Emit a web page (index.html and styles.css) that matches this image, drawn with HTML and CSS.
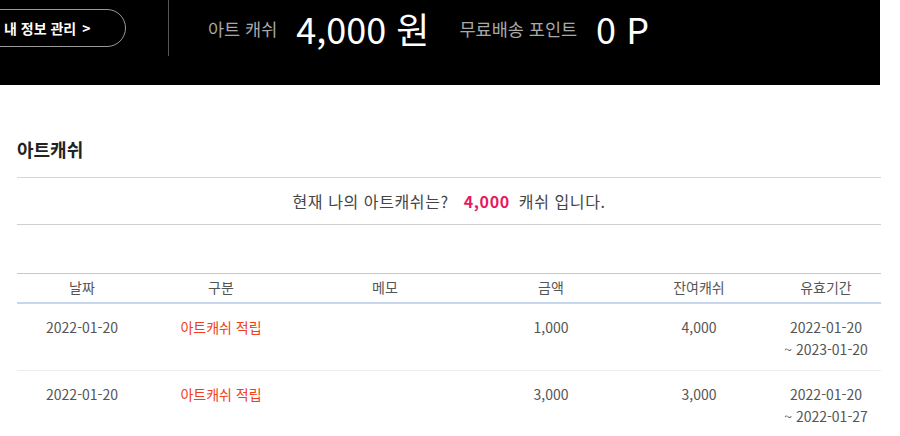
FILE: index.html
```html
<!DOCTYPE html>
<html lang="ko">
<head>
<meta charset="utf-8">
<link rel="stylesheet" href="styles.css">
</head>
<body>
<header class="topbar">
  <div class="topbar-row">
    <a class="my-btn">내 정보 관리 <span class="chev">&gt;</span></a>
    <span class="divider"></span>
    <span class="label">아트 캐쉬</span>
    <span class="value">4,000 원</span>
    <span class="label label-2">무료배송 포인트</span>
    <span class="value">0 P</span>
  </div>
</header>
<main class="content">
  <h2 class="title">아트캐쉬</h2>
  <div class="summary">현재 나의 아트캐쉬는? <strong class="amount">4,000</strong> 캐쉬 입니다.</div>
  <table class="cash-table">
    <colgroup>
      <col class="c1"><col class="c2"><col class="c3"><col class="c4"><col class="c5"><col class="c6">
    </colgroup>
    <thead>
      <tr><th>날짜</th><th>구분</th><th>메모</th><th>금액</th><th>잔여캐쉬</th><th>유효기간</th></tr>
    </thead>
    <tbody>
      <tr>
        <td>2022-01-20</td>
        <td class="kind">아트캐쉬 적립</td>
        <td></td>
        <td>1,000</td>
        <td>4,000</td>
        <td class="period">2022-01-20<br>~ 2023-01-20</td>
      </tr>
      <tr>
        <td>2022-01-20</td>
        <td class="kind">아트캐쉬 적립</td>
        <td></td>
        <td>3,000</td>
        <td>3,000</td>
        <td class="period">2022-01-20<br>~ 2022-01-27</td>
      </tr>
    </tbody>
  </table>
</main>
</body>
</html>
```
FILE: styles.css
```css
* { box-sizing: border-box; }
html, body { margin: 0; padding: 0; background: #fff; }
body {
  font-family: "Noto Sans CJK KR", "Noto Sans", sans-serif;
  color: #555;
  overflow: hidden;
}
.topbar {
  width: 880px;
  height: 85px;
  background: #000;
}
.topbar-row {
  height: 56px;
  display: flex;
  align-items: center;
}
.my-btn {
  margin-left: -30px;
  height: 38px;
  padding: 0 0 0 33px;
  border: 1px solid #9a9a9a;
  border-radius: 19px;
  color: #fff;
  font-weight: 700;
  font-size: 14px;
  display: flex;
  align-items: center;
  white-space: nowrap;
  width: 156px;
}
.chev { margin-left: 6px; font-weight: 700; }
.divider {
  align-self: stretch;
  width: 1px;
  background: #555;
  margin-left: 42px;
  margin-right: 39px;
}
.label {
  color: #a8a8a8;
  font-size: 17.5px;
  margin-right: 19px;
  white-space: nowrap;
}
.label-2 { margin-left: 30px; }
.value {
  color: #fff;
  font-size: 36px;
  font-weight: 400;
  white-space: nowrap;
}
.content {
  width: 881px;
  padding-left: 17px;
  padding-top: 50px;
}
.title {
  margin: 0;
  font-size: 18px;
  font-weight: 700;
  color: #222;
  line-height: 28px;
  padding-bottom: 14px;
  border-bottom: 1px solid #d6d6d6;
}
.summary {
  height: 47px;
  line-height: 46px;
  text-align: center;
  font-size: 16px;
  letter-spacing: 0.6px;
  color: #444;
  border-bottom: 1px solid #cfcfcf;
}
.amount {
  color: #e8185f;
  font-weight: 700;
  margin: 0 4px 0 10px;
}
.cash-table {
  margin-top: 48px;
  width: 864px;
  border-collapse: collapse;
  table-layout: fixed;
  font-size: 14px;
}
.c1 { width: 130px; }
.c2 { width: 148px; }
.c3 { width: 180px; }
.c4 { width: 152px; }
.c5 { width: 144px; }
.c6 { width: 110px; }
.cash-table th {
  font-weight: 400;
  color: #555;
  height: 29px;
  line-height: 20px;
  padding: 3px 0 4px;
  border-top: 1px solid #b7cbe6;
  border-bottom: 2px solid #c6d6ec;
}
.cash-table td {
  text-align: center;
  vertical-align: top;
  line-height: 22px;
  padding: 12px 0 10px;
  border-bottom: 1px solid #ececec;
  color: #555;
}
.cash-table td.kind { color: #f0401a; }
```
